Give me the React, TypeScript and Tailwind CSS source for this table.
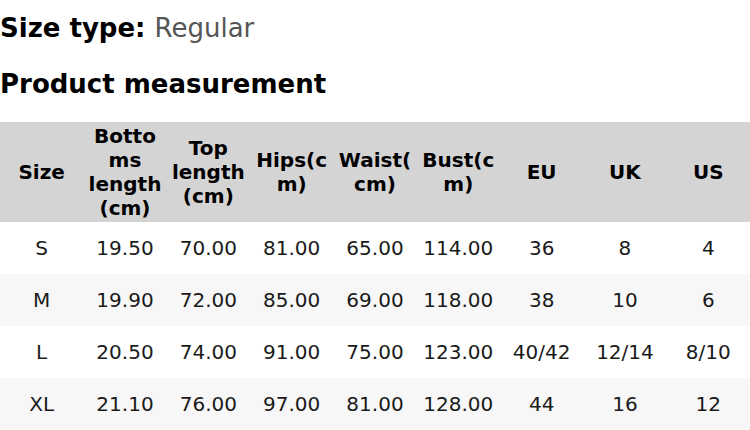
import { FC } from 'react'

const headers: string[] = [
  "Size",
  "Bottoms length (cm)",
  "Top length (cm)",
  "Hips(cm)",
  "Waist(cm)",
  "Bust(cm)",
  "EU",
  "UK",
  "US",
];

const rows: string[][] = [
  ["S", "19.50", "70.00", "81.00", "65.00", "114.00", "36", "8", "4"],
  ["M", "19.90", "72.00", "85.00", "69.00", "118.00", "38", "10", "6"],
  ["L", "20.50", "74.00", "91.00", "75.00", "123.00", "40/42", "12/14", "8/10"],
  ["XL", "21.10", "76.00", "97.00", "81.00", "128.00", "44", "16", "12"],
];

const App: FC = () => {
  return (
    <div className="w-[750px] h-[430px] overflow-hidden bg-white pt-[13px] text-black font-['DejaVu_Sans',sans-serif]">
      <p className="text-[26px] leading-[31px]">
        <span className="font-bold">Size type: </span>
        <span className="text-[#555555]">Regular</span>
      </p>
      <h2 className="mt-[25px] text-[26px] leading-[31px] font-bold">
        Product measurement
      </h2>
      <table className="mt-[22px] w-full table-fixed border-collapse text-[20px] leading-[24px]">
        <thead>
          <tr className="bg-[#d4d4d4]">
            {headers.map((h) => (
              <th
                key={h}
                className="h-[100px] px-1 py-[2px] align-middle text-center font-bold break-words"
              >
                {h}
              </th>
            ))}
          </tr>
        </thead>
        <tbody>
          {rows.map((row, i) => (
            <tr key={row[0]} className={i % 2 === 1 ? "bg-[#f7f7f7]" : "bg-white"}>
              {row.map((cell, j) => (
                <td key={j} className="px-1 py-[14px] text-center text-[#1a1a1a]">
                  {cell}
                </td>
              ))}
            </tr>
          ))}
        </tbody>
      </table>
    </div>
  );
};

export default App
